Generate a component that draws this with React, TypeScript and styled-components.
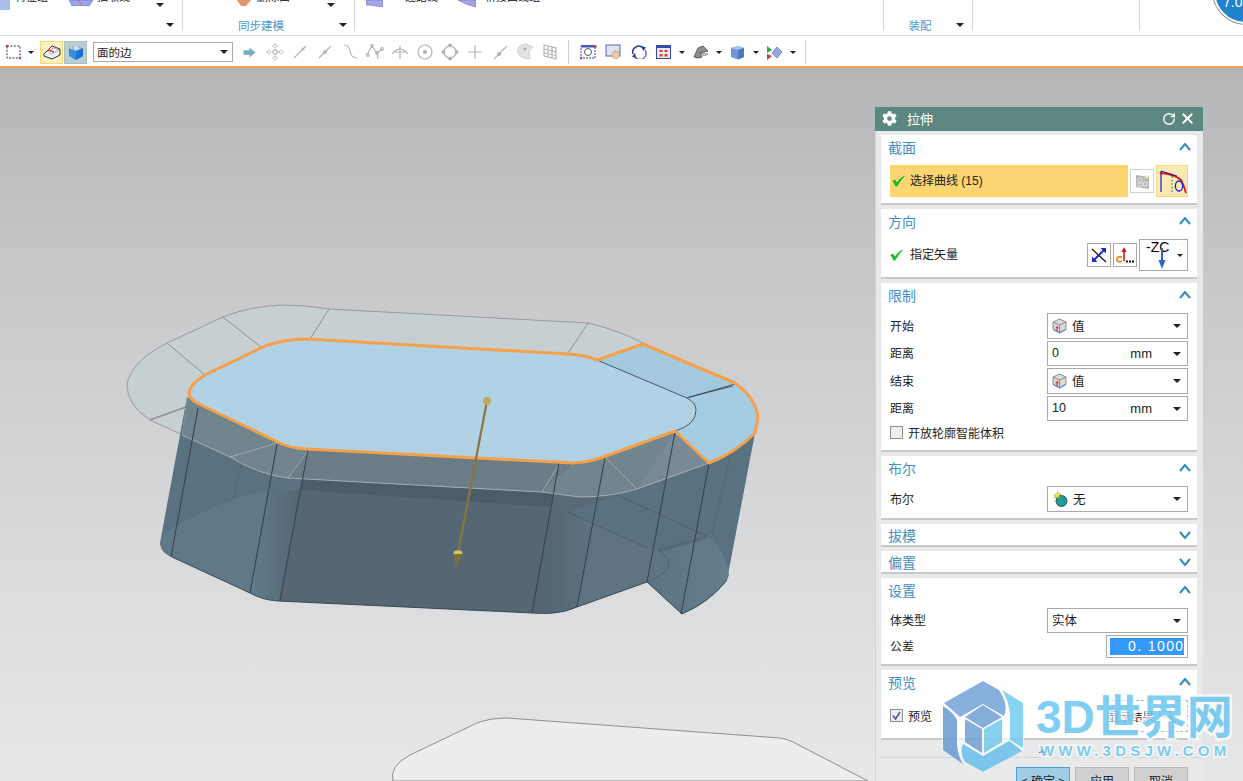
import React from 'react';
import styled, { createGlobalStyle } from 'styled-components';
import { FaCog } from 'react-icons/fa';
import { RotateCw, X } from 'lucide-react';

const GlobalStyle = createGlobalStyle`
  html, body { margin: 0; padding: 0; height: 100%; overflow: hidden; }
  body { font-family: "Liberation Sans", "Noto Sans CJK SC", sans-serif; color: #222; background: #fff; }
`;

const Page = styled.div`
  position: relative;
  display: flex;
  flex-direction: column;
  height: 781px;
  overflow: hidden;
`;

/* ---------- ribbon ---------- */
const Ribbon = styled.div`
  position: relative;
  display: flex;
  height: 36px;
  box-sizing: border-box;
  flex: none;
  background: #fff;
  border-bottom: 1px solid #dcdcdc;
  overflow: hidden;
`;

const Group = styled.div<{ $w: number; $plain?: boolean }>`
  display: flex;
  flex-direction: column;
  justify-content: space-between;
  width: ${(p) => p.$w}px;
  height: 31px;
  flex: none;
  box-sizing: border-box;
  border-right: ${(p) => (p.$plain ? 'none' : '1px solid #d6d6d6')};
`;

const TopRow = styled.div`
  display: flex;
  align-items: flex-end;
  height: 10px;
  overflow: hidden;
`;

const RibbonLabel = styled.span<{ $left: number }>`
  margin-left: ${(p) => p.$left}px;
  margin-bottom: 5px;
  font-size: 11px;
  line-height: 16px;
  white-space: nowrap;
  flex: none;
`;

const RibbonIcon = styled.svg<{ $left: number; $h: number }>`
  margin-left: ${(p) => p.$left}px;
  margin-bottom: ${(p) => 10 - p.$h}px;
  flex: none;
`;

const Footer = styled.div`
  display: flex;
  align-items: center;
  height: 16px;
  margin-bottom: -2px;
`;

const GroupTitle = styled.span`
  flex: 1;
  padding-top: 2px;
  text-align: center;
  font-size: 11.5px;
  line-height: 18px;
  color: #4a9ac9;
  white-space: nowrap;
`;

const Caret = styled.i<{ $right?: number; $left?: number; $size?: number }>`
  flex: none;
  width: 0;
  height: 0;
  margin-left: ${(p) => p.$left ?? 0}px;
  margin-right: ${(p) => p.$right ?? 0}px;
  border-left: ${(p) => p.$size ?? 4}px solid transparent;
  border-right: ${(p) => p.$size ?? 4}px solid transparent;
  border-top: ${(p) => p.$size ?? 4}px solid #222;
`;

const TopCaret = styled(Caret)`
  margin-bottom: 3px;
`;

const VersionBadge = styled.div`
  position: absolute;
  left: 1213px;
  top: -42px;
  width: 66px;
  height: 66px;
  box-sizing: border-box;
  border-radius: 50%;
  background: #1e82cf;
  border: 2px solid #fff;
  box-shadow: 0 0 0 1px #8b8b8b;
  color: #fff;
  font-size: 14px;
  line-height: 84px;
  padding-left: 8px;
`;

/* ---------- toolbar ---------- */
const Toolbar = styled.div`
  display: flex;
  align-items: center;
  height: 32px;
  box-sizing: border-box;
  flex: none;
  padding: 2px 0 0 5px;
  background: #fff;
  border-bottom: 2px solid #f0a050;
`;

const ToolSlot = styled.span<{ $w?: number }>`
  display: flex;
  align-items: center;
  justify-content: center;
  width: ${(p) => p.$w ?? 25}px;
  height: 22px;
  flex: none;
`;

const ToggleButton = styled.span<{ $tone: 'yellow' | 'teal' }>`
  display: flex;
  align-items: center;
  justify-content: center;
  width: 23px;
  height: 23px;
  box-sizing: border-box;
  flex: none;
  margin-right: 1px;
  background: ${(p) => (p.$tone === 'yellow' ? '#fdf0c4' : '#b9cfcf')};
  border: 1px solid ${(p) => (p.$tone === 'yellow' ? '#fbd676' : '#a9c0c0')};
`;

const FilterSelect = styled.div`
  display: flex;
  align-items: center;
  justify-content: space-between;
  box-sizing: border-box;
  width: 140px;
  height: 20px;
  margin: 0 4px 0 5px;
  padding: 0 4px 0 3px;
  border: 1px solid #a9a9a9;
  font-size: 11.5px;
  flex: none;
`;

const Separator = styled.span<{ $left?: number }>`
  width: 1px;
  height: 24px;
  margin-left: ${(p) => p.$left ?? 0}px;
  background: #cfcfcf;
  flex: none;
`;

/* ---------- canvas ---------- */
const Canvas = styled.div`
  position: relative;
  flex: 1;
  background: linear-gradient(#b4b5b7 0%, #c9cacc 33%, #dcddde 75%, #e6e7e9 100%);
`;

const ModelSvg = styled.svg`
  display: block;
  width: 100%;
  height: 100%;
`;

/* ---------- dialog ---------- */
const Dialog = styled.div`
  position: absolute;
  top: 39px;
  right: 40px;
  width: 328px;
  height: 700px;
  background: #e8e9ea;
  box-sizing: border-box;
`;

const DialogHeader = styled.div`
  display: flex;
  align-items: center;
  box-sizing: border-box;
  height: 24px;
  padding: 0 7px 1px;
  background: #5c8780;
  color: #fff;
  font-size: 13px;
`;

const DialogTitle = styled.span`
  flex: 1;
  margin-left: 10px;
`;

const DialogBody = styled.div`
  display: flex;
  flex-direction: column;
  gap: 4px;
  padding: 4px 6px 0 5px;
  border-left: 1px solid #d3d3d3;
`;

const Section = styled.section<{ $collapsed?: boolean }>`
  background: #fff;
  border-bottom: 2px solid #c9c9c9;
  padding-bottom: ${(p) => (p.$collapsed ? 0 : 6)}px;
`;

const SectionHead = styled.div<{ $collapsed?: boolean }>`
  display: flex;
  align-items: center;
  justify-content: space-between;
  box-sizing: border-box;
  height: ${(p) => (p.$collapsed ? 21 : 26)}px;
  margin-bottom: ${(p) => (p.$collapsed ? 0 : 4)}px;
  padding: 0 6px ${(p) => (p.$collapsed ? 0 : 2)}px 7px;
  color: #3f90c4;
  font-size: 14px;
`;

const Rows = styled.div`
  display: flex;
  flex-direction: column;
  gap: 2px;
  padding: 0 9px;
`;

const Row = styled.div<{ $h?: number }>`
  display: flex;
  align-items: center;
  height: ${(p) => p.$h ?? 26}px;
  font-size: 12px;
  gap: 2px;
`;

const RowLabel = styled.span`
  flex: 1;
  padding-bottom: 2px;
  white-space: nowrap;
`;

const SelectStep = styled.div`
  display: flex;
  flex: 1;
  align-items: center;
  align-self: stretch;
  background: #fbd56f;
  padding-left: 2px;
  gap: 5px;
`;

const StepText = styled.span`
  padding-bottom: 3px;
`;

const StatusLabel = styled.span`
  flex: 1;
  margin-left: 5px;
  padding-bottom: 3px;
  white-space: nowrap;
`;

const IconButton = styled.span<{ $w: number; $h: number; $active?: boolean; $faded?: boolean }>`
  display: flex;
  align-items: center;
  justify-content: center;
  box-sizing: border-box;
  width: ${(p) => p.$w}px;
  height: ${(p) => p.$h}px;
  flex: none;
  background: ${(p) => (p.$active ? '#fbe9b4' : '#fff')};
  border: 1px solid ${(p) => (p.$active ? '#fbd676' : p.$faded ? '#d2d2d2' : '#a9a9a9')};
`;

const Dropdown = styled.div`
  display: flex;
  align-items: center;
  box-sizing: border-box;
  width: 141px;
  height: 100%;
  flex: none;
  padding: 0 6px 0 4px;
  border: 1px solid #a9a9a9;
  font-size: 12px;
  gap: 5px;
`;

const ValueText = styled.span`
  flex: 1;
  padding-bottom: 2px;
  font-size: 12.5px;
  white-space: nowrap;
`;

const UnitText = styled.span`
  font-size: 13px;
  margin-right: 16px;
`;

const CheckRow = styled.label`
  display: flex;
  align-items: center;
  gap: 5px;
  flex: 1;
  padding-bottom: 2px;
  font-size: 12px;
  white-space: nowrap;
`;

const CheckBox = styled.span<{ $checked?: boolean }>`
  display: flex;
  align-items: center;
  justify-content: center;
  width: 13px;
  height: 13px;
  box-sizing: border-box;
  flex: none;
  background: #eee;
  border: 1px solid #8f8f8f;
`;

const ToleranceBox = styled.div`
  display: flex;
  align-items: center;
  box-sizing: border-box;
  width: 82px;
  height: 23px;
  flex: none;
  padding: 0 3px;
  border: 1px solid #a9a9a9;
`;

const ToleranceValue = styled.div`
  width: 100%;
  height: 17px;
  line-height: 17px;
  background: #3399ff;
  color: #fff;
  font-size: 14px;
  letter-spacing: 1.4px;
  padding-left: 18px;
  box-sizing: border-box;
  overflow: hidden;
  white-space: nowrap;
`;

const ResultButton = styled.div`
  display: flex;
  align-items: center;
  box-sizing: border-box;
  width: 81px;
  height: 32px;
  flex: none;
  gap: 4px;
  border: 1px dashed #b5b5b5;
  font-size: 11.5px;
  white-space: nowrap;
`;

const DialogFoot = styled.div`
  display: flex;
  justify-content: center;
  height: 14px;
  padding-top: 5px;
  box-sizing: border-box;
  border-bottom: 1px solid #d6d6d6;
  margin-right: -6px;
`;

const FootCaret = styled.i`
  width: 0;
  height: 0;
  border-left: 3px solid transparent;
  border-right: 3px solid transparent;
  border-bottom: 4px solid #222;
`;

const ActionRow = styled.div`
  display: flex;
  justify-content: flex-end;
  gap: 5px;
  padding: 5px 9px 0 0;
`;

const ActionButton = styled.button<{ $primary?: boolean }>`
  width: 54px;
  height: 26px;
  padding: 0;
  font-family: inherit;
  font-size: 12px;
  color: #222;
  background: ${(p) => (p.$primary ? '#9fcde8' : '#cfd0d2')};
  border: 1px solid ${(p) => (p.$primary ? '#49a3d8' : '#b9b9b9')};
`;

/* ---------- watermark ---------- */
const Watermark = styled.div`
  position: absolute;
  left: 942px;
  top: 679px;
  display: flex;
  gap: 10px;
  opacity: 0.88;
  pointer-events: none;
`;

const BrandColumn = styled.div`
  display: flex;
  flex-direction: column;
  margin-top: 12px;
`;

const BrandName = styled.div`
  height: 52px;
  line-height: 52px;
  font-size: 46px;
  font-weight: 700;
  white-space: nowrap;
  color: #6fc8f0;
  -webkit-text-stroke: 5px rgba(255, 255, 255, 0.85);
  paint-order: stroke fill;
  font-family: "Liberation Sans", "Noto Sans CJK SC", sans-serif;
`;

const BrandUrl = styled.div`
  margin-left: 4px;
  line-height: 16px;
  font-size: 15px;
  font-weight: 700;
  letter-spacing: 4.2px;
  white-space: nowrap;
  color: #6fc8f0;
  -webkit-text-stroke: 3px rgba(255, 255, 255, 0.85);
  paint-order: stroke fill;
`;

/* ---------- drawings ---------- */
const Chevron = ({ down }: { down?: boolean }) => (
  <svg width="12" height="8" viewBox="0 0 12 8">
    <polyline
      points={down ? '1,1 6,7 11,1' : '1,7 6,1 11,7'}
      fill="none"
      stroke="#2f8dbb"
      strokeWidth="2"
    />
  </svg>
);

const GreenCheck = () => (
  <svg width="13" height="12" viewBox="0 0 13 12">
    <path d="M0.5 6 L3 4.5 L5 7.5 Q8 3 12 0.8 L12.6 1.6 Q8.5 5.5 5.2 11.5 L3.6 11.5 Z" fill="#18b92e" />
  </svg>
);

const CubeValue = () => (
  <svg width="15" height="16" viewBox="0 0 15 16">
    <path d="M7.5 1 L14 4 V11.5 L7.5 15 L1 11.5 V4 Z" fill="#d9d9d9" stroke="#777" strokeWidth="0.8" />
    <path d="M1 4 L7.5 7 L14 4 M7.5 7 V15" fill="none" stroke="#777" strokeWidth="0.8" />
    <path d="M1.5 11.5 L7.5 14.7 L13.5 11.5" fill="none" stroke="#5c8ed4" strokeWidth="1.2" />
    <path d="M5 13 V9 M3.8 10.2 L5 8.5 L6.2 10.2" fill="none" stroke="#d11" strokeWidth="1" />
  </svg>
);

const BoolIcon = () => (
  <svg width="16" height="16" viewBox="0 0 16 16">
    <circle cx="9.5" cy="10" r="5.5" fill="#1f9e96" stroke="#234" strokeWidth="0.8" />
    <path d="M2 4 L5 3 L5.5 0.5 L7 3 L9 3 L7 5 L7.5 7.5 L5 6 L2 7 L3.5 5 Z" fill="#f4ee30" stroke="#7a7a20" strokeWidth="0.4" />
  </svg>
);

const SheetIcon = () => (
  <svg width="17" height="17" viewBox="0 0 17 17">
    <path d="M2 2 L15 4 V16 L2 14 Z" fill="#b5b5b5" />
    <path d="M4 5 H8 V9 H4 Z M9.5 9 H13 V13 H9.5 Z M4 10 H8 V13 H4 Z" fill="none" stroke="#e6e6e6" strokeWidth="0.9" />
    <path d="M12 1 L13 3 L15.5 3.5 L13.5 5 L12 7 L11 4.5 Z" fill="#e8e2b0" />
  </svg>
);

const CurveIcon = () => (
  <svg width="30" height="26" viewBox="0 0 30 26">
    <path d="M4 3 V24" stroke="#1420c8" strokeWidth="1.2" fill="none" />
    <path d="M3 5 Q18 6 24 12 Q27 17 29 25" stroke="#d81818" strokeWidth="1.8" fill="none" />
    <path d="M4 3 L20 8" stroke="#1420c8" strokeWidth="1" fill="none" />
    <path d="M15 8 V24" stroke="#2a7a3a" strokeWidth="0.9" strokeDasharray="2 1.5" fill="none" />
    <ellipse cx="22" cy="18" rx="3.6" ry="5" stroke="#1420c8" strokeWidth="1.3" fill="none" />
  </svg>
);

const ReverseIcon = () => (
  <svg width="18" height="18" viewBox="0 0 18 18">
    <path d="M2 3 L16 16" stroke="#111" strokeWidth="1.2" />
    <path d="M3 15 L15 3" stroke="#1a2bc0" strokeWidth="2" />
    <path d="M10.5 2 L16 2 L16 7.5 Z M2 10.5 L2 16 L7.5 16 Z" fill="#1a2bc0" />
  </svg>
);

const VectorDialogIcon = () => (
  <svg width="20" height="18" viewBox="0 0 20 18">
    <path d="M9 15 V4" stroke="#c81818" strokeWidth="1.6" />
    <path d="M6.5 6 L9 1 L11.5 6 Z" fill="#c81818" />
    <path d="M7 11 Q1 10 2 14 Q3 17 7 15" fill="none" stroke="#e68a18" strokeWidth="1.8" />
    <rect x="11" y="14.5" width="2" height="2" fill="#111" />
    <rect x="14" y="14.5" width="2" height="2" fill="#111" />
    <rect x="17" y="14.5" width="2" height="2" fill="#111" />
  </svg>
);

const ZcLabel = styled.text`
  font-family: "Liberation Sans", sans-serif;
  font-size: 14px;
  fill: #000;
`;

const ZcVector = () => (
  <svg width="28" height="30" viewBox="0 0 28 30">
    <ZcLabel x="2" y="12">-ZC</ZcLabel>
    <path d="M18 8 V24" stroke="#2a62d0" strokeWidth="2" />
    <path d="M14.5 20 H21.5 L18 29 Z" fill="#2a62d0" />
  </svg>
);

const Magnifier = () => (
  <svg width="20" height="24" viewBox="0 0 20 24">
    <circle cx="7" cy="8" r="5.5" fill="none" stroke="#8a8a8a" strokeWidth="1.2" />
    <path d="M11 12 L18 20" stroke="#d8c27a" strokeWidth="2.4" />
  </svg>
);

const gray = '#b4b4b4';

const GrayIcon = ({ children }: { children: React.ReactNode }) => (
  <svg width="18" height="18" viewBox="0 0 18 18" fill="none" stroke={gray} strokeWidth="1.2">
    {children}
  </svg>
);

const disabledTools: React.ReactNode[] = [
  <GrayIcon key="points">
    <circle cx="9" cy="9" r="2.2" />
    <path d="M9 1 L11 3 L9 5 L7 3 Z M9 13 L11 15 L9 17 L7 15 Z M1 9 L3 7 L5 9 L3 11 Z M13 9 L15 7 L17 9 L15 11 Z" strokeDasharray="1.5 1" />
  </GrayIcon>,
  <GrayIcon key="line1">
    <path d="M3 15 L15 3" />
    <circle cx="12" cy="6" r="1" fill={gray} />
  </GrayIcon>,
  <GrayIcon key="line2">
    <path d="M3 15 L15 3" />
    <circle cx="9" cy="9" r="1.3" fill={gray} />
  </GrayIcon>,
  <GrayIcon key="curve">
    <path d="M3 2 Q8 2 9 8 Q10 15 16 15" />
  </GrayIcon>,
  <GrayIcon key="spline">
    <path d="M1 12 L6 3 L11 10 L16 6 M11 10 L12 16" />
    <circle cx="6" cy="3" r="1.3" />
    <circle cx="11" cy="10" r="1.3" />
    <circle cx="16" cy="6" r="1.3" />
    <circle cx="1.8" cy="12" r="1.3" />
  </GrayIcon>,
  <GrayIcon key="arcTick">
    <path d="M1 11 Q9 1 17 11 M9 3 V16 M2 9 H16" />
  </GrayIcon>,
  <GrayIcon key="circleDot">
    <circle cx="9" cy="9" r="7" />
    <circle cx="9" cy="9" r="1.5" fill={gray} />
  </GrayIcon>,
  <GrayIcon key="circleKnobs">
    <circle cx="9" cy="9" r="6" />
    <circle cx="9" cy="2.5" r="1.4" fill={gray} />
    <circle cx="9" cy="15.5" r="1.4" fill={gray} />
    <circle cx="2.5" cy="9" r="1.4" fill={gray} />
    <circle cx="15.5" cy="9" r="1.4" fill={gray} />
  </GrayIcon>,
  <GrayIcon key="cross">
    <path d="M9 2 V16 M2 9 H16" />
  </GrayIcon>,
  <GrayIcon key="midLine">
    <path d="M3 16 L16 3" />
    <circle cx="8" cy="11" r="1.5" fill={gray} />
  </GrayIcon>,
  <svg key="surface" width="18" height="18" viewBox="0 0 18 18">
    <path d="M2 5 Q5 1 10 1 L17 4 Q13 6 13 10 L14 16 Q6 15 3 12 Q1 9 2 5 Z" fill="#e3e3e3" stroke="#cfcfcf" />
    <circle cx="9" cy="6" r="1.4" fill="#aaa" />
  </svg>,
  <GrayIcon key="grid">
    <path d="M3 2 L15 5 V16 L3 13 Z M7 3 V14 M11 4 V15 M3 6 L15 9 M3 10 L15 12.5" />
  </GrayIcon>,
];

const Model = () => (
  <ModelSvg viewBox="0 68 1243 713" preserveAspectRatio="none">
    <defs>
      <linearGradient id="cylLeft" x1="0" x2="1" y1="0" y2="0">
        <stop offset="0" stopColor="#617b8c" />
        <stop offset="1" stopColor="#546773" />
      </linearGradient>
      <linearGradient id="cylRight" x1="0" x2="1" y1="0" y2="0">
        <stop offset="0.3" stopColor="#546773" />
        <stop offset="1" stopColor="#5e7482" />
      </linearGradient>
      <linearGradient id="capGrad" x1="0" x2="1" y1="0" y2="0">
        <stop offset="0" stopColor="#5c7382" />
        <stop offset="1" stopColor="#657d8c" />
      </linearGradient>
    </defs>

    {/* ghost profile on the floor */}
    <path d="M393,781 Q389,766 410,755 L477,723 Q490,718 507,718 L780,738 Q787,739 793,742 L868,781 Z" fill="#ecedef" stroke="#8f8f8f" strokeWidth="1" />

    {/* translucent flange behind the top face */}
    <path d="M283,305 Q305,305 329,309 L588,323 Q618,330 643,343 L735,383 L709,463 L637,489 Q610,497 580,497 L542,492 L288,478 Q260,475 230,457 L150,420 Q127,405 127,385 Q130,362 167,343 L223,317 Q250,306 283,305 Z" fill="#c6cfd2" stroke="#9a9a9a" strokeWidth="1" />
    <g stroke="#8f8f8f" strokeWidth="1">
      <path d="M167,343 L205,375 M223,317 L262,348 M329,309 L310,339 M588,323 L568,353" />
      <path d="M150,420 L197,403" strokeWidth="1.4" />
    </g>

    {/* lower body */}
    <path d="M187,397 L160,543 Q161,553 172,557 L250,593 Q262,600 278,601 L532,613 Q545,614 553,613 Q566,612 577,607 L647,582 L682,614 Q710,602 727,580 L755,433 L709,463 L637,489 Q610,497 580,497 L288,478 L182,435 Z" fill="#5a7180" />
    <path d="M303,479 L278,601 L532,613 L553,493 Z" fill="#546773" />
    <path d="M303,479 L300,490 L550,507 L553,493 Z" fill="#4c5d68" />
    <path d="M553,493 L550,507 Q560,508 568,512 L617,495 L580,497 Z" fill="#566a77" />
    <path d="M163,535 Q190,515 233,500 Q250,492 270,491 L250,593 L172,557 Q161,553 160,543 Z" fill="#617987" />
    <path d="M268,491 L300,491 L280,600 Q262,600 250,593 Z" fill="url(#cylLeft)" />
    <path d="M568,512 L647,548 L658,550 L647,582 L577,607 Q566,612 553,613 Z" fill="#5e7482" />
    <path d="M550,507 Q560,508 568,512 L596,522 L577,607 Q566,612 553,613 L532,613 Z" fill="url(#cylRight)" />
    <path d="M658,550 L707,536 Q724,548 729,575 L727,580 Q710,602 682,614 L647,582 Z" fill="url(#capGrad)" />
    <g fill="none" stroke="#495a66" strokeWidth="0.8">
      <path d="M568,512 L647,548 M617,495 L707,536 M658,550 L707,536 M660,551 L707,538" />
      <path d="M658,550 Q672,560 668,568 Q662,576 647,582" />
      <path d="M233,500 L247,440 M712,535 L735,435" opacity="0.5" />
    </g>

    {/* front flange band */}
    <path d="M187,397 L197,403 L280,443 Q290,448 307,449 L573,463 Q590,462 603,457 L675,431 L709,463 L637,489 Q610,497 580,497 L542,492 L288,478 Q260,475 230,457 L182,435 Z" fill="#71858f" />
    <path d="M307,449 L573,463 L542,492 L288,478 Z" fill="#6a7d87" />
    <path d="M675,431 L709,463 L637,489 Z" fill="#788b95" />
    <path d="M182,435 L230,457 Q260,475 288,478 L542,492 L580,497 Q610,497 637,489 L709,463" fill="none" stroke="#a7adb0" strokeWidth="1" />
    <path d="M230,457 L277,443 M288,478 L308,451 M542,492 L560,463 M637,489 L605,457" fill="none" stroke="#a2a8ab" strokeWidth="1" />

    {/* vertical edges */}
    <g stroke="#37434c" strokeWidth="1.1">
      <path d="M198,408 L171,557 M277,444 L250,593 M308,450 L280,600 M559,463 L532,613 M605,458 L577,607 M675,432 L647,582 M709,463 L681,614" />
    </g>
    <path d="M172,557 L250,593 Q262,600 278,601 L532,613 Q545,614 553,613 Q566,612 577,607 L647,582 L682,614 Q710,602 727,580" fill="none" stroke="#39454d" strokeWidth="0.9" />

    {/* top face */}
    <path d="M189,393 Q190,384 205,375 L265,346 Q285,339 307,339 L568,354 Q585,355 597,360 L643,344 L735,383 Q756,398 758,418 L755,433 Q735,453 709,463 L675,431 L603,457 Q590,462 573,463 L307,449 Q290,448 280,443 L197,403 Q189,398 189,393 Z" fill="#b1d2e5" />
    <path d="M597,360 L643,344 L735,383 L687,398 Z" fill="#a2c9dd" />
    <path d="M687,398 L735,383 Q756,398 758,418 L755,433 Q735,453 709,463 L675,431 Q696,425 696,410 Q696,403 687,398 Z" fill="#a4cce3" />
    <path d="M597,360 L687,398 Q696,403 696,410 Q696,425 675,431 M687,398 L735,384 M689,397 L733,386" fill="none" stroke="#2d3a42" strokeWidth="0.8" />
    <path d="M189,393 Q190,384 205,375 L265,346 Q285,339 307,339 L568,354 Q585,355 597,360 L643,344 L735,383 Q756,398 758,418 L755,433 Q735,453 709,463 L675,431 L603,457 Q590,462 573,463 L307,449 Q290,448 280,443 L197,403 Q189,398 189,393 Z" fill="none" stroke="#f6a04a" strokeWidth="3" strokeLinejoin="round" />

    {/* extrude direction handle */}
    <path d="M487,401 L458,553" stroke="#86773c" strokeWidth="2.2" />
    <circle cx="487" cy="401" r="4.2" fill="#c2ad5c" />
    <ellipse cx="458" cy="553" rx="4.5" ry="2.8" fill="#d9c160" />
    <path d="M454,554 L462,554 L456,568 Z" fill="#7f7033" />
  </ModelSvg>
);

const HexLogo = () => (
  <svg width="84" height="96" viewBox="943 679 84 96">
    <path d="M984,680 L1025,703 V750 L984,773 L943,750 V703 Z" fill="#fff" opacity="0.75" />
    <path d="M945,703 L984,681 L1000,690 Q1010,705 1005,716 L984,704 L961,717 Q952,709 945,703 Z" fill="#78a6da" />
    <path d="M1003,690 L1024,703 V748 L1011,740 V714 Q1010,702 1003,690 Z" fill="#79cdf2" />
    <path d="M1023,751 L984,772 L966,762 Q960,752 964,744 L984,756 L1010,741 Q1018,746 1023,751 Z" fill="#6cc2ea" />
    <path d="M944,706 Q954,712 958,720 V745 Q959,756 964,764 L944,750 Z" fill="#6c9dd3" />
    <path d="M984,705 L1003,717 L984,728 L966,717 Z" fill="#75a3d8" />
    <path d="M966,719 L983,729 V753 L966,742 Z" fill="#75a3d8" />
    <path d="M985,729 L1003,719 V742 L985,753 Z" fill="#76cbf0" />
  </svg>
);

const App: React.FC = () => {
  return (
    <Page>
      <GlobalStyle />
      <Ribbon>
        <Group $w={183}>
          <TopRow>
            <RibbonIcon $left={0} $h={10} width="10" height="10" viewBox="0 0 10 10">
              <rect width="10" height="10" fill="#a9bdea" />
            </RibbonIcon>
            <RibbonLabel $left={5}>特征组</RibbonLabel>
            <RibbonIcon $left={21} $h={6} width="24" height="6" viewBox="0 0 24 6">
              <path d="M0 0 H24 L20 6 H3 Z" fill="#9aa6e8" stroke="#5d68c0" strokeWidth="0.6" />
              <path d="M9 0 L12 4" stroke="#d64a4a" strokeWidth="0.8" />
            </RibbonIcon>
            <RibbonLabel $left={4}>抽取线</RibbonLabel>
            <TopCaret $left={26} />
          </TopRow>
          <Footer>
            <GroupTitle />
            <Caret $right={8} />
          </Footer>
        </Group>
        <Group $w={172}>
          <TopRow>
            <RibbonIcon $left={54} $h={6} width="14" height="6" viewBox="0 0 14 6">
              <path d="M0 0 H14 L9 6 H4 Z" fill="#e2946a" />
            </RibbonIcon>
            <RibbonLabel $left={6}>删除面</RibbonLabel>
            <TopCaret $left={37} />
          </TopRow>
          <Footer>
            <GroupTitle>同步建模</GroupTitle>
            <Caret $right={7} />
          </Footer>
        </Group>
        <Group $w={529}>
          <TopRow>
            <RibbonIcon $left={11} $h={7} width="17" height="7" viewBox="0 0 17 7">
              <path d="M0 0 H17 V7 L3 5 H0 Z" fill="#a6a6e6" stroke="#6c6cc0" strokeWidth="0.6" />
            </RibbonIcon>
            <RibbonLabel $left={22}>连结线</RibbonLabel>
            <RibbonIcon $left={20} $h={7} width="18" height="7" viewBox="0 0 18 7">
              <path d="M0 0 H18 V7 Q8 5 0 0 Z" fill="#a6a6e6" stroke="#6c6cc0" strokeWidth="0.6" />
            </RibbonIcon>
            <RibbonLabel $left={9}>桥接曲线组</RibbonLabel>
          </TopRow>
          <Footer />
        </Group>
        <Group $w={89}>
          <TopRow />
          <Footer>
            <GroupTitle>装配</GroupTitle>
            <Caret $right={8} />
          </Footer>
        </Group>
        <Group $w={167}>
          <TopRow />
          <Footer />
        </Group>
        <VersionBadge>7.00</VersionBadge>
      </Ribbon>

      <Toolbar>
        <svg width="18" height="16" viewBox="0 0 18 16">
          <rect x="2" y="2" width="13" height="12" fill="none" stroke="#333" strokeDasharray="2 1.4" />
          <circle cx="2" cy="2" r="1.3" fill="#d63a3a" />
          <circle cx="15" cy="14" r="1.3" fill="#d63a3a" />
        </svg>
        <Caret $left={5} $right={6} $size={3} />
        <ToggleButton $tone="yellow">
          <svg width="18" height="16" viewBox="0 0 18 16">
            <path d="M1 10 L9 2 L17 5 V11 L9 15 L1 12 Z" fill="#f2f2f2" stroke="#333" />
            <path d="M4 7 L11 4 L16 6 L8 10 Z" fill="#fff" stroke="#666" strokeWidth="0.5" />
            <path d="M5 6 L11 8" stroke="#e03a3a" strokeWidth="1.6" />
          </svg>
        </ToggleButton>
        <ToggleButton $tone="teal">
          <svg width="18" height="18" viewBox="0 0 18 18">
            <path d="M2 5 L9 2 L16 5 V13 L9 17 L2 13 Z" fill="#2f8de4" />
            <path d="M2 5 L9 8 L16 5 L9 2 Z" fill="#bfe0f4" />
            <path d="M9 8 V17 L16 13 V5 Z" fill="#1f6fd2" />
            <path d="M6 3 V8 M12 3 L14 7" stroke="#e06060" strokeWidth="0.8" />
          </svg>
        </ToggleButton>
        <FilterSelect>
          面的边
          <Caret $size={4} />
        </FilterSelect>
        <ToolSlot>
          <svg width="13" height="11" viewBox="0 0 18 14">
            <path d="M1 4 H9 V0.5 L17 7 L9 13.5 V10 H1 Z" fill="#6fb3c0" stroke="#9bbcc4" strokeWidth="0.6" />
          </svg>
        </ToolSlot>
        {disabledTools.map((tool, i) => (
          <ToolSlot key={i}>{tool}</ToolSlot>
        ))}
        <Separator $left={6} />
        <ToolSlot $w={7} />
        <ToolSlot>
          <svg width="17" height="16" viewBox="0 0 17 16">
            <rect x="1" y="2" width="14" height="12" fill="#fff" stroke="#2a38c0" strokeDasharray="2 1" />
            <rect x="1" y="1" width="14" height="2.5" fill="#4a58b8" />
            <circle cx="8" cy="8" r="3.5" fill="none" stroke="#555" />
            <circle cx="15.5" cy="2.5" r="1.3" fill="#d83030" />
            <circle cx="1" cy="14" r="1.3" fill="#d83030" />
          </svg>
        </ToolSlot>
        <ToolSlot>
          <svg width="17" height="16" viewBox="0 0 17 16">
            <rect x="1" y="1" width="14" height="11" fill="#dfe3f2" stroke="#5a68b0" />
            <path d="M8 14 Q6 8 9 8 L10 6 L11 8 L13 7 L14 9 Q15 13 12 15 Z" fill="#eecba0" stroke="#b08c60" strokeWidth="0.5" />
          </svg>
        </ToolSlot>
        <ToolSlot>
          <svg width="16" height="14" viewBox="0 0 16 14">
            <path d="M2 9 A6 6 0 0 1 12 3" fill="none" stroke="#2a3f8f" strokeWidth="1.5" />
            <path d="M14 5 A6 6 0 0 1 4 12" fill="none" stroke="#5a78c0" strokeWidth="1.5" />
            <path d="M10.5 1 L15 2.5 L12 6 Z M5.5 13.5 L1 11.5 L4 8 Z" fill="#2a3f8f" />
          </svg>
        </ToolSlot>
        <ToolSlot>
          <svg width="15" height="14" viewBox="0 0 15 14">
            <rect x="0.5" y="0.5" width="14" height="13" fill="#ece9f6" stroke="#3a48a8" />
            <rect x="0.5" y="0.5" width="14" height="2.5" fill="#3a48a8" />
            <path d="M3.5 5 H6.5 V7 H3.5 Z M8.5 5 H11.5 V7 H8.5 Z M3.5 9 H6.5 V11.5 H3.5 Z M8.5 9 H11.5 V11.5 H8.5 Z" fill="#e04030" />
          </svg>
        </ToolSlot>
        <ToolSlot $w={12}><Caret $size={3} /></ToolSlot>
        <ToolSlot>
          <svg width="16" height="14" viewBox="0 0 16 14">
            <path d="M1 12 L5 3 L10 1 L15 6 L7 8 L9 12 Q5 14 1 12 Z" fill="#8e8e8e" stroke="#333" strokeWidth="0.7" />
            <path d="M7 8 L15 9 L11 11 Z" fill="#c8c8c8" stroke="#555" strokeWidth="0.5" />
          </svg>
        </ToolSlot>
        <ToolSlot $w={12}><Caret $size={3} /></ToolSlot>
        <ToolSlot>
          <svg width="15" height="15" viewBox="0 0 15 15">
            <path d="M1 3 L8 1 L14 3 V12 L8 14.5 L1 12 Z" fill="#6e96d8" />
            <path d="M1 3 L8 5 L14 3 L8 1 Z" fill="#a9c2ea" />
            <path d="M8 5 V14.5 L14 12 V3 Z" fill="#4f78c0" />
          </svg>
        </ToolSlot>
        <ToolSlot $w={12}><Caret $size={3} /></ToolSlot>
        <ToolSlot>
          <svg width="17" height="15" viewBox="0 0 17 15">
            <path d="M1 1 L6 5 L1 8 Z" fill="#30a840" />
            <path d="M1 9 L6 11 L1 15 Z" fill="#d83838" />
            <path d="M6 8 L11 2 L16 7 L11 13 Z" fill="#9aa8e0" stroke="#5666b0" strokeWidth="0.7" />
          </svg>
        </ToolSlot>
        <ToolSlot $w={12}><Caret $size={3} /></ToolSlot>
        <Separator $left={6} />
      </Toolbar>

      <Canvas>
        <Model />
        <Dialog>
          <DialogHeader>
            <FaCog size={15} />
            <DialogTitle>拉伸</DialogTitle>
            <RotateCw size={14} strokeWidth={2.4} />
            <X size={17} strokeWidth={2.6} style={{ marginLeft: 3 }} />
          </DialogHeader>
          <DialogBody>
            <Section>
              <SectionHead>截面<Chevron /></SectionHead>
              <Rows>
                <Row $h={32}>
                  <SelectStep>
                    <GreenCheck />
                    <StepText>选择曲线 (15)</StepText>
                  </SelectStep>
                  <IconButton $w={24} $h={24} $faded><SheetIcon /></IconButton>
                  <IconButton $w={32} $h={32} $active><CurveIcon /></IconButton>
                </Row>
              </Rows>
            </Section>

            <Section>
              <SectionHead>方向<Chevron /></SectionHead>
              <Rows>
                <Row $h={32}>
                  <GreenCheck />
                  <StatusLabel>指定矢量</StatusLabel>
                  <IconButton $w={24} $h={24}><ReverseIcon /></IconButton>
                  <IconButton $w={24} $h={24}><VectorDialogIcon /></IconButton>
                  <IconButton $w={49} $h={32}>
                    <ZcVector />
                    <Caret $left={5} $size={3} />
                  </IconButton>
                </Row>
              </Rows>
            </Section>

            <Section>
              <SectionHead>限制<Chevron /></SectionHead>
              <Rows>
                <Row>
                  <RowLabel>开始</RowLabel>
                  <Dropdown><CubeValue /><ValueText>值</ValueText><Caret /></Dropdown>
                </Row>
                <Row $h={25}>
                  <RowLabel>距离</RowLabel>
                  <Dropdown><ValueText>0</ValueText><UnitText>mm</UnitText><Caret /></Dropdown>
                </Row>
                <Row>
                  <RowLabel>结束</RowLabel>
                  <Dropdown><CubeValue /><ValueText>值</ValueText><Caret /></Dropdown>
                </Row>
                <Row $h={25}>
                  <RowLabel>距离</RowLabel>
                  <Dropdown><ValueText>10</ValueText><UnitText>mm</UnitText><Caret /></Dropdown>
                </Row>
                <Row $h={21}>
                  <CheckRow><CheckBox />开放轮廓智能体积</CheckRow>
                </Row>
              </Rows>
            </Section>

            <Section>
              <SectionHead>布尔<Chevron /></SectionHead>
              <Rows>
                <Row>
                  <RowLabel>布尔</RowLabel>
                  <Dropdown><BoolIcon /><ValueText>无</ValueText><Caret /></Dropdown>
                </Row>
              </Rows>
            </Section>

            <Section $collapsed>
              <SectionHead $collapsed>拔模<Chevron down /></SectionHead>
            </Section>
            <Section $collapsed>
              <SectionHead $collapsed>偏置<Chevron down /></SectionHead>
            </Section>

            <Section>
              <SectionHead>设置<Chevron /></SectionHead>
              <Rows>
                <Row $h={25}>
                  <RowLabel>体类型</RowLabel>
                  <Dropdown><ValueText>实体</ValueText><Caret /></Dropdown>
                </Row>
                <Row $h={23}>
                  <RowLabel>公差</RowLabel>
                  <ToleranceBox><ToleranceValue>0. 1000</ToleranceValue></ToleranceBox>
                </Row>
              </Rows>
            </Section>

            <Section>
              <SectionHead>预览<Chevron /></SectionHead>
              <Rows>
                <Row $h={32}>
                  <CheckRow>
                    <CheckBox>
                      <svg width="9" height="9" viewBox="0 0 9 9">
                        <path d="M1 4.5 L3.5 8 L8 1" fill="none" stroke="#4a5aa8" strokeWidth="1.6" />
                      </svg>
                    </CheckBox>
                    预览
                  </CheckRow>
                  <ResultButton>显示结果<Magnifier /></ResultButton>
                </Row>
              </Rows>
            </Section>

            <DialogFoot><FootCaret /></DialogFoot>
            <ActionRow>
              <ActionButton $primary>&lt; 确定 &gt;</ActionButton>
              <ActionButton>应用</ActionButton>
              <ActionButton>取消</ActionButton>
            </ActionRow>
          </DialogBody>
        </Dialog>
      </Canvas>

      <Watermark>
        <HexLogo />
        <BrandColumn>
          <BrandName>3D世界网</BrandName>
          <BrandUrl>WWW.3DSJW.COM</BrandUrl>
        </BrandColumn>
      </Watermark>
    </Page>
  );
};

export default App;
